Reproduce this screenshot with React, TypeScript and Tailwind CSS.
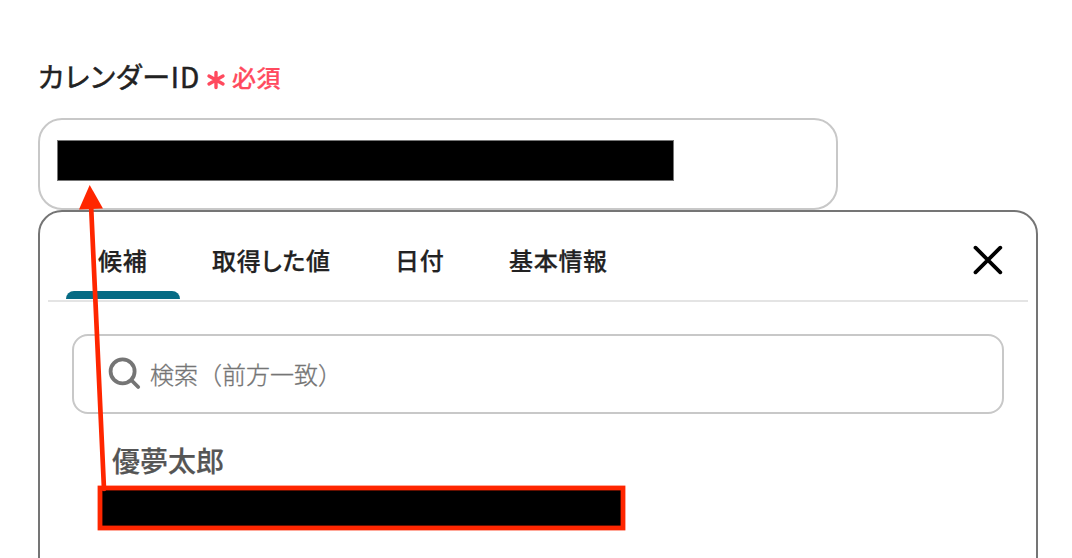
const tabs = [
  { label: '候補', width: 'w-[114px]' },
  { label: '取得した値', width: 'w-[183px]' },
  { label: '日付', width: 'w-[114px]' },
  { label: '基本情報', width: 'w-[164px]' },
];

function Asterisk() {
  return (
    <svg className="mt-[13px] ml-[6px] h-[20px] w-[20px] shrink-0" viewBox="0 0 20 20" fill="none" stroke="#ff4a5e" strokeWidth="3.4" strokeLinecap="round">
      <path d="M10 2.4V17.6M3 6L17 14M17 6L3 14" />
    </svg>
  );
}

function Annotation() {
  return (
    <svg className="pointer-events-none absolute top-0 left-0" width="1072" height="558" viewBox="0 0 1072 558" fill="none">
      <rect x="100" y="488" width="523" height="40" stroke="#ff2600" strokeWidth="4.8" />
      <path d="M91 204L104 489" stroke="#ff2600" strokeWidth="4.7" strokeLinecap="round" />
      <path d="M89.7 185L103 208.6L79 209.6Z" fill="#ff2600" />
    </svg>
  );
}

export default function App() {
  return (
    <main className="relative h-[558px] w-[1072px] overflow-hidden bg-white pt-[57px] pl-[38px] font-['Noto_Sans_CJK_JP',sans-serif] text-[#222]">
      <div className="flex h-[61px] items-start">
        <span className="text-[28px] leading-[38px] font-normal tracking-[0.84px] whitespace-nowrap [-webkit-text-stroke:0.5px_#222] [font-feature-settings:'palt']">カレンダーID</span>
        <Asterisk />
        <span className="mt-[2px] ml-[6px] text-[24px] leading-[36px] font-medium tracking-[0.5px] whitespace-nowrap text-[#ff4a5e] [-webkit-text-stroke:0.2px_#ff4a5e]">必須</span>
      </div>
      <div className="h-[92px] w-[800px] rounded-[24px] border-2 border-[#c8c8c8] pt-5 pl-[17px]">
        <div className="h-[41px] w-[617px] border border-[#777] bg-black" />
      </div>
      <section className="h-[400px] w-[1000px] rounded-[24px] border-2 border-[#757575] px-2">
        <div className="flex h-[90px] items-start border-b-2 border-[#e4e4e4] pl-[18px]">
          {tabs.map((tab, i) => (
            <div key={tab.label} className={`flex h-[87px] flex-col justify-between ${tab.width}`}>
              <span className="pt-[30px] pl-8 text-[24px] leading-[36px] font-medium tracking-[0.7px] whitespace-nowrap [-webkit-text-stroke:0.25px_#222] [font-feature-settings:'palt']">{tab.label}</span>
              {i === 0 && <div className="h-2 rounded-t-[8px] bg-[#066b84]" />}
            </div>
          ))}
          <svg className="mt-[33px] mr-[25px] ml-auto h-[30px] w-[30px]" viewBox="0 0 30 30" fill="none" stroke="#000" strokeWidth="3.8" strokeLinecap="round">
            <path d="M2.5 2.7L27.3 27.3M27.3 2.7L2.5 27.3" />
          </svg>
        </div>
        <div className="mt-8 ml-6 flex h-[80px] w-[932px] items-center rounded-[16px] border-2 border-[#c8c8c8] pl-[34px]">
          <svg className="h-[34px] w-[34px]" viewBox="0 0 34 34" fill="none" stroke="#757575" strokeWidth="3.8" strokeLinecap="round">
            <circle cx="14.6" cy="14.4" r="12" />
            <path d="M23.2 23L30.2 30" />
          </svg>
          <span className="ml-[8px] text-[24px] leading-[36px] font-light whitespace-nowrap text-[#757575] [-webkit-text-stroke:0.3px_#757575]">検索（前方一致）</span>
        </div>
        <p className="mt-[26px] ml-16 text-[28px] leading-[40px] font-medium text-[#555] [-webkit-text-stroke:0.2px_#555]">優夢太郎</p>
        <div className="mt-[7px] ml-[52px] h-[40px] w-[523px] bg-black" />
      </section>
      <Annotation />
    </main>
  );
}
